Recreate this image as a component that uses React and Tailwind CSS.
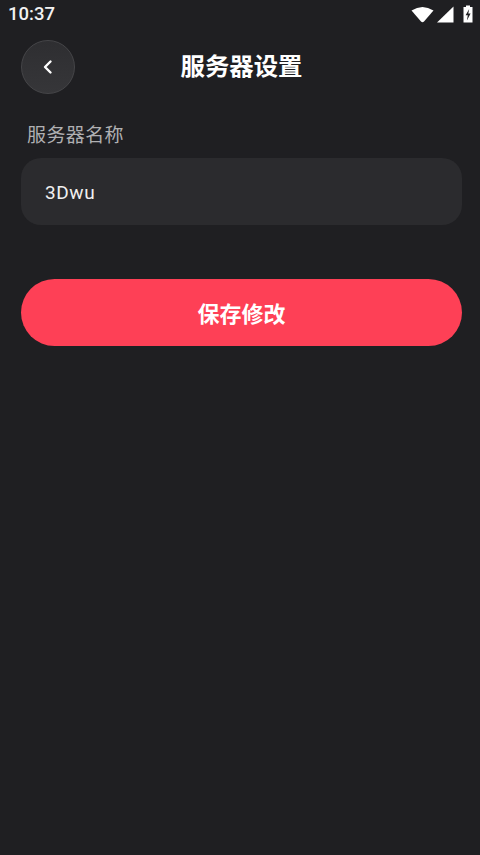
const font = 'font-["Roboto","Noto_Sans_CJK_SC",sans-serif]';

function Wifi() {
  return (
    <svg width="23" height="17" viewBox="0 0 23 17" fill="#fff">
      <path d="M0.5 4.6 Q11.5 -2.6 22.5 4.6 L13 15.6 Q11.5 17 10 15.6 Z" />
    </svg>
  );
}

function Signal() {
  return (
    <svg width="17" height="17" viewBox="0 0 17 17" fill="#fff">
      <path d="M0 16.5 L16.5 0.5 V16.5 Z" />
    </svg>
  );
}

function Battery() {
  return (
    <svg width="10" height="18" viewBox="0 0 10 18">
      <path d="M3 0.5 H7 V2 H9.5 V17.5 H0.5 V2 H3 Z" fill="#fff" />
      <path d="M6.2 4 L2.6 10.2 H4.8 L3.9 15.5 L7.6 8.6 H5.3 Z" fill="#202023" />
    </svg>
  );
}

export default function App() {
  return (
    <div className={`${font} w-[480px] h-[855px] bg-[#1f1f22] flex flex-col overflow-hidden`}>
      {/* status bar */}
      <div className="h-[27px] shrink-0 pl-[8px] pr-[7px] pt-[1px] flex items-center justify-between">
        <span className="text-[18.5px] leading-[26px] font-medium text-[#f2f2f2]">10:37</span>
        <div className="flex items-center">
          <Wifi />
          <div className="ml-[3px]">
            <Signal />
          </div>
          <div className="ml-[9px]">
            <Battery />
          </div>
        </div>
      </div>

      {/* header */}
      <div className="mt-[13px] h-[54px] ml-[21px] mr-[18px] relative flex items-center justify-center">
        <button className="absolute left-0 top-0 w-[54px] h-[54px] rounded-full bg-gradient-to-b from-[#2e2e31] to-[#363639] border border-[#454548] flex items-center justify-center">
          <svg width="12" height="16" viewBox="0 0 12 16" fill="none" stroke="#fff" strokeWidth="2.4" strokeLinecap="round" strokeLinejoin="round">
            <path d="M8.5 2.5 L3 8 L8.5 13.5" />
          </svg>
        </button>
        <h1 className="text-[24.4px] leading-[32px] font-bold text-white">服务器设置</h1>
      </div>

      <div className="pl-[21px] pr-[18px] pt-[28px] flex flex-col">
        <label className="pl-[6px] text-[19px] leading-[28px] text-[#b0b0b2] tracking-[0.4px]">服务器名称</label>
        <div className="mt-[8px] h-[67px] rounded-[20px] bg-[#2b2b2e] pl-[24px] pt-[3px] flex items-center">
          <span className="text-[19px] text-[#f0f0f0] tracking-[0.6px]">3Dwu</span>
        </div>
        <button className="mt-[54px] h-[67px] pt-[3px] rounded-full bg-[#fe4056] text-[22px] font-semibold text-white">
          保存修改
        </button>
      </div>
    </div>
  );
}
